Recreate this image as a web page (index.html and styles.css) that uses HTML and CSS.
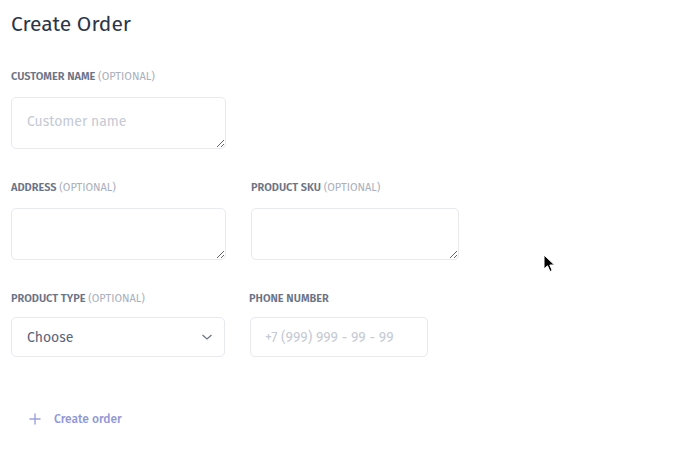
FILE: index.html
```html
<!DOCTYPE html>
<html>
<head>
<meta charset="utf-8">
<link rel="stylesheet" href="styles.css">
</head>
<body>
<div class="page">
  <h1 class="title">Create Order</h1>
  <div class="row">
    <div class="field">
      <label class="label">Customer name <span class="opt">(optional)</span></label>
      <textarea class="area w215" placeholder="Customer name"></textarea>
    </div>
  </div>
  <div class="row">
    <div class="field">
      <label class="label">Address <span class="opt">(optional)</span></label>
      <textarea class="area w215"></textarea>
    </div>
    <div class="field">
      <label class="label">Product SKU <span class="opt">(optional)</span></label>
      <textarea class="area w208"></textarea>
    </div>
  </div>
  <div class="row row3">
    <div class="field">
      <label class="label">Product type <span class="opt">(optional)</span></label>
      <div class="select">
        <span>Choose</span>
        <svg width="12" height="8" viewBox="0 0 12 8"><path d="M1.5 2 L6 6 L10.5 2" fill="none" stroke="#6b7385" stroke-width="1.2"/></svg>
      </div>
    </div>
    <div class="field">
      <label class="label shift">Phone number</label>
      <input class="input" placeholder="+7 (999) 999 - 99 - 99">
    </div>
  </div>
  <button class="create">
    <svg width="12" height="12" viewBox="0 0 12 12"><path d="M6 0.5 V11.5 M0.5 6 H11.5" stroke="#9aa2dc" stroke-width="1.4"/></svg>
    <span>Create order</span>
  </button>
</div>
<svg class="cursor" width="14" height="20" viewBox="0 0 14 20"><path d="M1 1 L1 15 L4.5 11.8 L7 17.5 L9.2 16.5 L6.8 11 L11.5 11 Z" fill="#000" stroke="#fff" stroke-width="1"/></svg>
</body>
</html>
```
FILE: styles.css
```css
html, body { margin: 0; padding: 0; background: #fff; }
body { font-family: "Fira Sans", "Open Sans", "Noto Sans", sans-serif; color: #2d3648; }
.page { padding: 9px 0 0 11px; }
.title { margin: 0; font-size: 21px; font-weight: 400; color: #2c3548; line-height: 30px; }
.row { display: flex; gap: 25px; margin-top: 32px; }
.title + .row { margin-top: 31px; }
.field { display: flex; flex-direction: column; }
.label { font-size: 11px; font-weight: 600; text-transform: uppercase; color: #6b7385; line-height: 14px; margin-bottom: 13px; }
.shift { margin-left: -1px; }
.row3 .label { margin-bottom: 11px; }
.opt { font-weight: 400; color: #a9afbc; }
.area { box-sizing: border-box; height: 52px; border: 1px solid #e8e9ef; border-radius: 5px; padding: 15px 15px 13px; font-family: inherit; font-size: 14px; color: #2d3648; resize: vertical; margin: 0; outline: none; display: block; }
.area::placeholder, .input::placeholder { color: #c5cad4; }
.w215 { width: 215px; }
.w208 { width: 208px; }
.select { box-sizing: border-box; width: 214px; height: 40px; border: 1px solid #e8e9ef; border-radius: 5px; display: flex; align-items: center; justify-content: space-between; padding: 0 11px 0 15px; font-size: 14px; color: #5b6478; }
.input { box-sizing: border-box; width: 178px; height: 40px; border: 1px solid #e8e9ef; border-radius: 5px; padding: 0 14px; font-family: inherit; font-size: 14px; margin: 0; outline: none; }
.create { margin: 55px 0 0 18px; border: 0; background: none; padding: 0; display: flex; align-items: center; gap: 13px; font-family: inherit; font-size: 12px; font-weight: 500; color: #8f98d6; cursor: pointer; }
.cursor { position: absolute; left: 543px; top: 254px; }
```
